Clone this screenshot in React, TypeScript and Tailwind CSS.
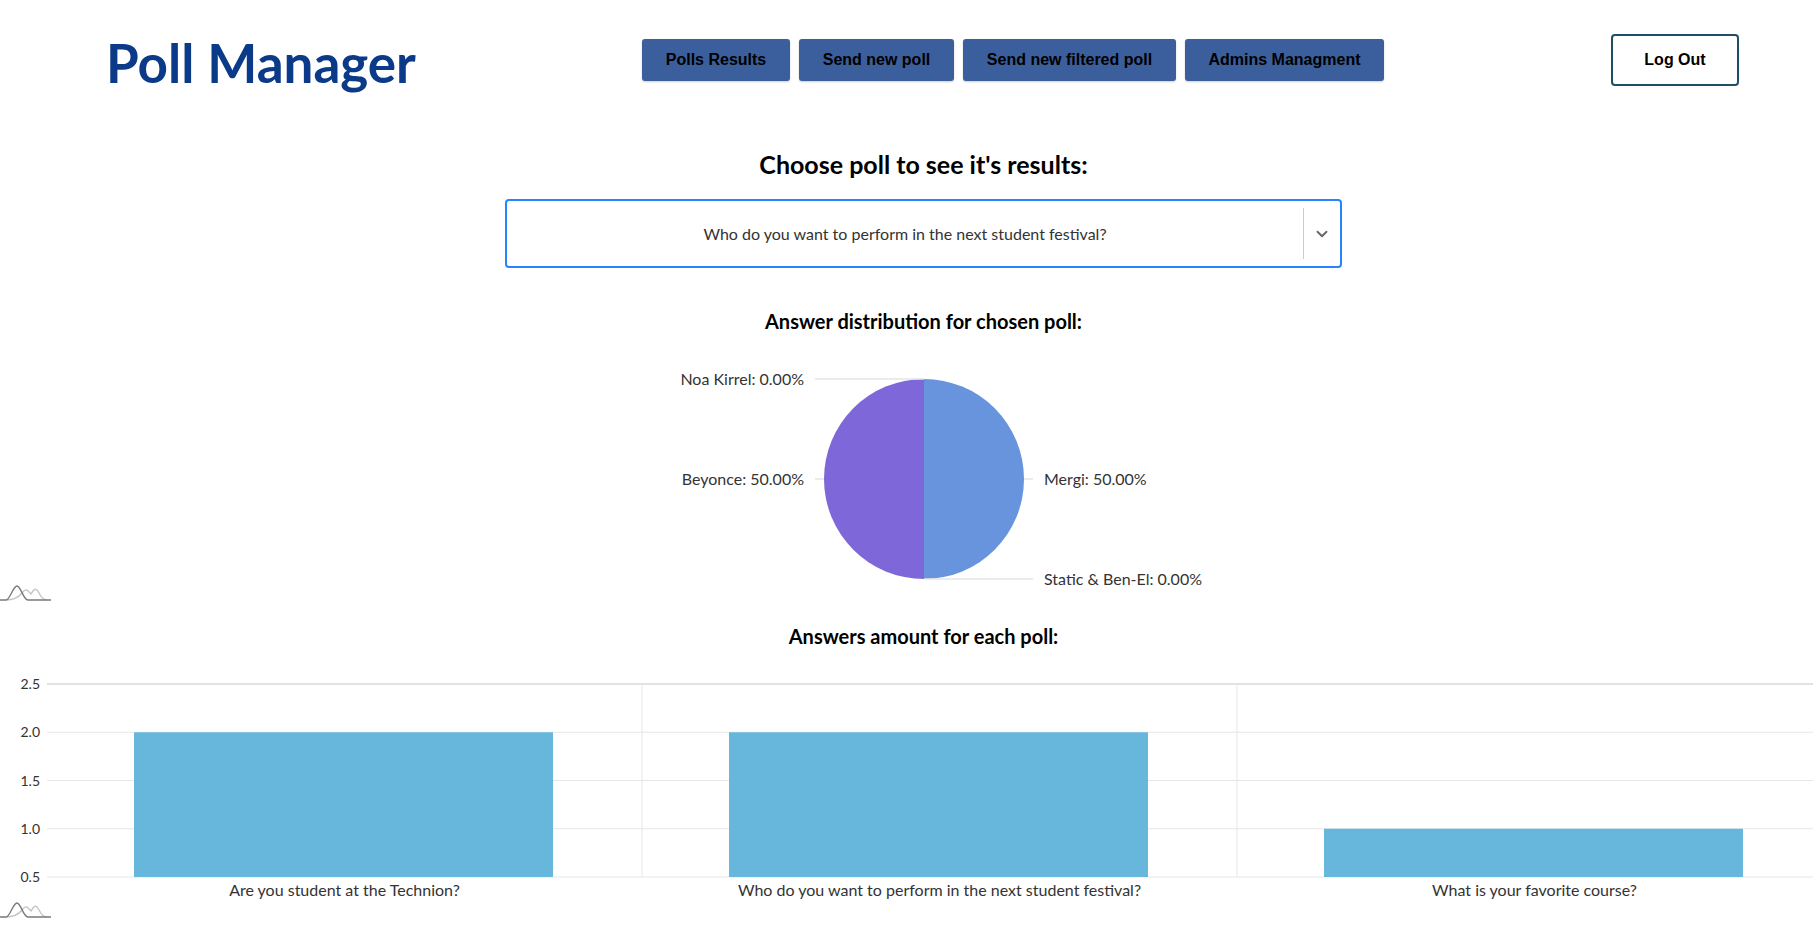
import { ChevronDown } from 'lucide-react';

const navItems = [
  { label: 'Polls Results', w: 'w-[148px]' },
  { label: 'Send new poll', w: 'w-[155px]' },
  { label: 'Send new filtered poll', w: 'w-[213px]' },
  { label: 'Admins Managment', w: 'w-[199px]' },
];

const bars = [
  { label: 'Are you student at the Technion?', value: 2 },
  { label: 'Who do you want to perform in the next student festival?', value: 2 },
  { label: 'What is your favorite course?', value: 1 },
];

function CurvesIcon() {
  return (
    <svg width="51" height="18" viewBox="0 0 51 18" fill="none">
      <path d="M6 16 C12 16 18 14 22 9 C25 5 27 5 29 8 L31 10 L33 7 C35 4 37 5 39 9 C41 13 43 16 47 16" stroke="#c4c4c4" strokeWidth="1.4" />
      <path d="M0 16 L6 16 C10 16 13 2 17 2 C21 2 23 16 28 16 L51 16" stroke="#7a7a7a" strokeWidth="1.4" />
    </svg>
  );
}

function PieChart() {
  const font = { fontFamily: 'Lato, sans-serif', fontSize: 16, fill: '#333' };
  // pie centered at (300, 129), r = 100
  return (
    <svg width="600" height="234" viewBox="0 0 600 234" className="overflow-visible">
      <path d="M300 29 A100 100 0 0 0 300 229 Z" fill="#7e68d9" />
      <path d="M300 29 A100 100 0 0 1 300 229 Z" fill="#6794dc" />
      <line x1="191" y1="29" x2="300" y2="29" stroke="#e4e4e4" strokeWidth="1.5" />
      <line x1="191" y1="129" x2="200" y2="129" stroke="#e4e4e4" strokeWidth="1.5" />
      <line x1="400" y1="129" x2="409" y2="129" stroke="#e4e4e4" strokeWidth="1.5" />
      <line x1="300" y1="229" x2="409" y2="229" stroke="#e4e4e4" strokeWidth="1.5" />
      <text x="180" y="35" textAnchor="end" style={font}>Noa Kirrel: 0.00%</text>
      <text x="180" y="135" textAnchor="end" style={font}>Beyonce: 50.00%</text>
      <text x="420" y="135" style={font}>Mergi: 50.00%</text>
      <text x="420" y="235" style={font}>Static &amp; Ben-El: 0.00%</text>
    </svg>
  );
}

function BarChart() {
  const left = 47;
  const cat = 595;
  const yOf = (v: number) => 206 - ((v - 0.5) / 0.5) * 48.25;
  const ticks = [2.5, 2, 1.5, 1, 0.5];
  const font = { fontFamily: 'Lato, sans-serif', fill: '#333' };
  return (
    <svg width="1813" height="230" viewBox="0 0 1813 230" className="block">
      {ticks.map((t) => (
        <g key={t}>
          <line x1={left} y1={yOf(t)} x2={1813} y2={yOf(t)} stroke={t === 2.5 ? '#e2e2e2' : '#e6e6e6'} strokeWidth={t === 2.5 ? 2 : 1} />
          <text x="40" y={yOf(t) + 5} textAnchor="end" style={{ ...font, fontSize: 14 }}>{t.toFixed(1)}</text>
        </g>
      ))}
      <line x1={left + cat} y1={yOf(2.5)} x2={left + cat} y2={yOf(0.5)} stroke="#e6e6e6" />
      <line x1={left + cat * 2} y1={yOf(2.5)} x2={left + cat * 2} y2={yOf(0.5)} stroke="#e6e6e6" />
      {bars.map((b, i) => {
        const x = left + cat * i + 87;
        return (
          <g key={b.label}>
            <rect x={x} y={yOf(b.value)} width={419} height={yOf(0.5) - yOf(b.value)} fill="#67b6dc" />
            <text x={left + cat * i + cat / 2} y="225" textAnchor="middle" style={{ ...font, fontSize: 16 }}>{b.label}</text>
          </g>
        );
      })}
    </svg>
  );
}

export default function App() {
  return (
    <div className="min-h-screen bg-white overflow-hidden">
      {/* Header */}
      <header className="flex items-center h-[120px] pl-[106px] pr-[74px]">
        <div className="w-[536px] pt-1">
          <h1 className="text-[53px] font-bold text-[#0b3a88] leading-none font-['Lato']">Poll Manager</h1>
        </div>
        <nav className="flex gap-[9px]">
          {navItems.map((item) => (
            <button
              key={item.label}
              className={`${item.w} h-[42px] bg-[#3b5e9c] rounded-[3px] text-black font-bold text-[16px] font-['Liberation_Sans'] shadow-[0_1px_2px_rgba(0,0,0,0.2)]`}
            >
              {item.label}
            </button>
          ))}
        </nav>
        <button className="ml-auto w-[128px] h-[52px] border-2 border-[#1f4f63] rounded-[4px] text-black font-bold text-[16px] font-['Liberation_Sans']">
          Log Out
        </button>
      </header>

      {/* Poll selection + pie */}
      <section className="flex flex-col items-center pl-[34px]">
        <h2 className="mt-[28px] text-[25px] leading-[32px] font-bold text-black font-['Lato']">Choose poll to see it's results:</h2>
        <div className="mt-[19px] w-[837px] h-[69px] border-2 border-[#2684ff] rounded-[4px] flex items-center">
          <div className="flex-1 text-center text-[16px] text-[#333] font-['Lato']">Who do you want to perform in the next student festival?</div>
          <div className="w-px h-[51px] bg-[#cccccc]" />
          <div className="w-[36px] flex justify-center text-[#666]">
            <ChevronDown size={18} strokeWidth={2.5} />
          </div>
        </div>
        <h3 className="mt-[39px] text-[20px] leading-[28px] font-bold text-black font-['Lato']">Answer distribution for chosen poll:</h3>
        <div className="mt-[15px]">
          <PieChart />
        </div>
      </section>

      <div className="h-[18px] flex items-end">
        <CurvesIcon />
      </div>

      {/* Bars */}
      <section className="flex flex-col">
        <h3 className="mt-[20px] pl-[34px] text-center text-[20px] leading-[28px] font-bold text-black font-['Lato']">Answers amount for each poll:</h3>
        <div className="mt-[21px]">
          <BarChart />
        </div>
        <CurvesIcon />
      </section>
    </div>
  );
}
